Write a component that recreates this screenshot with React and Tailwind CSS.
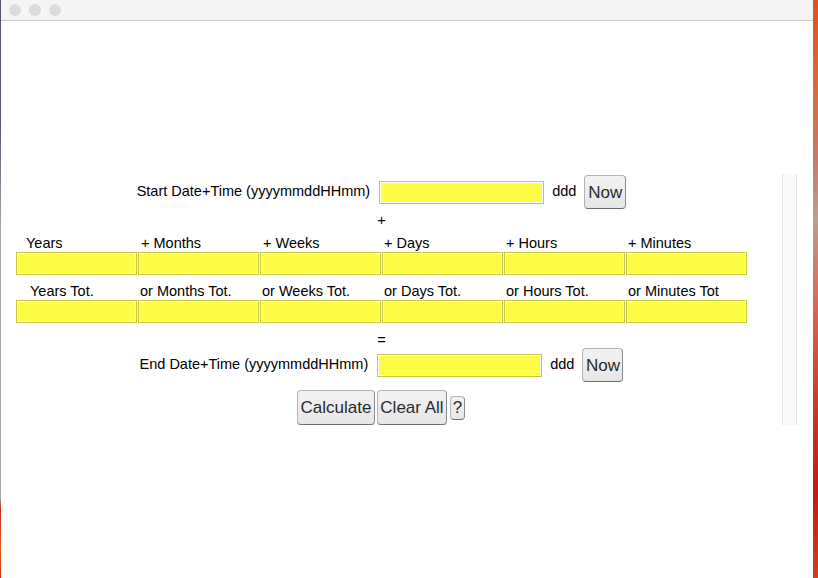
import React from "react";

const FONT = { fontFamily: '"Liberation Sans", Arial, sans-serif' };

const startLabels = ["Years", "+ Months", "+ Weeks", "+ Days", "+ Hours", "+ Minutes"];
const totLabels = ["Years Tot.", "or Months Tot.", "or Weeks Tot.", "or Days Tot.", "or Hours Tot.", "or Minutes Tot"];
const startPad = ["pl-[10px]", "pl-[3px]", "pl-[3px]", "pl-[2px]", "pl-[2px]", "pl-[2px]"];
const totPad = ["pl-[14px]", "pl-[2px]", "pl-[2px]", "pl-[2px]", "pl-[2px]", "pl-[2px]"];

function YellowBox({ className = "" }) {
  return (
    <div
      className={
        "h-[23px] bg-[#fdfd45] border border-[#c8c84c] shadow-[inset_0_0_0_1px_#ffffff] " +
        className
      }
    />
  );
}

function MacButton({ children, className = "" }) {
  return (
    <button
      className={
        "flex items-center justify-center rounded-[4px] border border-[#b4b4b4] border-b-[#6e6e6e] border-r-[#8a8a8a] bg-[linear-gradient(#f2f2f2,#e6e6e6)] text-[17px] text-[#2a2a2a] leading-none " +
        className
      }
    >
      {children}
    </button>
  );
}

function DateRow({ label, btnW }) {
  return (
    <div className="flex h-[34px] items-center justify-center text-[14.5px] text-black">
      <span className="whitespace-nowrap">{label}</span>
      <YellowBox className="w-[165px] shrink-0 ml-[9px]" />
      <span className="ml-[8px]">ddd</span>
      <MacButton className={`${btnW} h-[34px] shrink-0 ml-[8px]`}>Now</MacButton>
    </div>
  );
}

export default function App() {
  return (
    <div className="flex h-[578px] w-[818px] overflow-hidden bg-white" style={FONT}>
      <div className="w-[1px] bg-[linear-gradient(#4e5670_0%,#4e5670_20%,#a8a8a8_40%,#a8a8a8_86%,#c8281a_88%,#e06418_95%,#d02a10_100%)]" />
      <div className="flex w-[812px] flex-col bg-white">
        <div className="flex h-[21px] shrink-0 items-center gap-[8px] border-b border-[#c9c9c9] bg-[#f5f5f5] pl-[8px] pb-[1px]">
          <div className="h-[12px] w-[12px] rounded-full bg-[#dcdcdc]" />
          <div className="h-[12px] w-[12px] rounded-full bg-[#dcdcdc]" />
          <div className="h-[12px] w-[12px] rounded-full bg-[#dcdcdc]" />
        </div>

        <div className="flex flex-1">
          <div className="ml-[15px] mt-[154px] flex w-[731px] flex-col">
            <DateRow label="Start Date+Time (yyyymmddHHmm)" btnW="w-[42px]" />

            <div className="h-[20px] pt-[4px] text-center text-[14.5px] leading-[15px]">+</div>

            <div className="grid h-[23px] grid-cols-6 gap-x-[1px] text-[14.5px] leading-[15px]">
              {startLabels.map((l, i) => (
                <div key={l} className={`pt-[7px] whitespace-nowrap ${startPad[i]}`}>{l}</div>
              ))}
            </div>
            <div className="grid grid-cols-6 gap-x-[1px]">
              {startLabels.map((l) => (
                <YellowBox key={l} />
              ))}
            </div>

            <div className="grid h-[25px] grid-cols-6 gap-x-[1px] text-[14.5px] leading-[15px]">
              {totLabels.map((l, i) => (
                <div key={l} className={`pt-[9px] whitespace-nowrap ${totPad[i]}`}>{l}</div>
              ))}
            </div>
            <div className="grid grid-cols-6 gap-x-[1px]">
              {totLabels.map((l) => (
                <YellowBox key={l} />
              ))}
            </div>

            <div className="h-[25px] pt-[10px] text-center text-[14.5px] leading-[15px]">=</div>

            <DateRow label="End Date+Time (yyyymmddHHmm)" btnW="w-[41px]" />

            <div className="mt-[8px] flex items-center justify-center gap-[2px] pr-[1px]">
              <MacButton className="h-[35px] w-[78px]">Calculate</MacButton>
              <MacButton className="h-[35px] w-[70px]">Clear All</MacButton>
              <MacButton className="ml-[1px] h-[24px] w-[15px] rounded-[3px]">?</MacButton>
            </div>
          </div>

          <div className="ml-[35px] mt-[153px] h-[251px] w-[15px] border-x border-[#e6e6e6] bg-[#f9f9f9]" />
        </div>
      </div>
      <div className="w-[5px] bg-[linear-gradient(170deg,#e4501e_0%,#d86a3a_15%,#c87a70_28%,#b8a090_38%,#d87060_50%,#c83a2a_70%,#c41818_85%,#d2401a_100%)]" />
    </div>
  );
}
